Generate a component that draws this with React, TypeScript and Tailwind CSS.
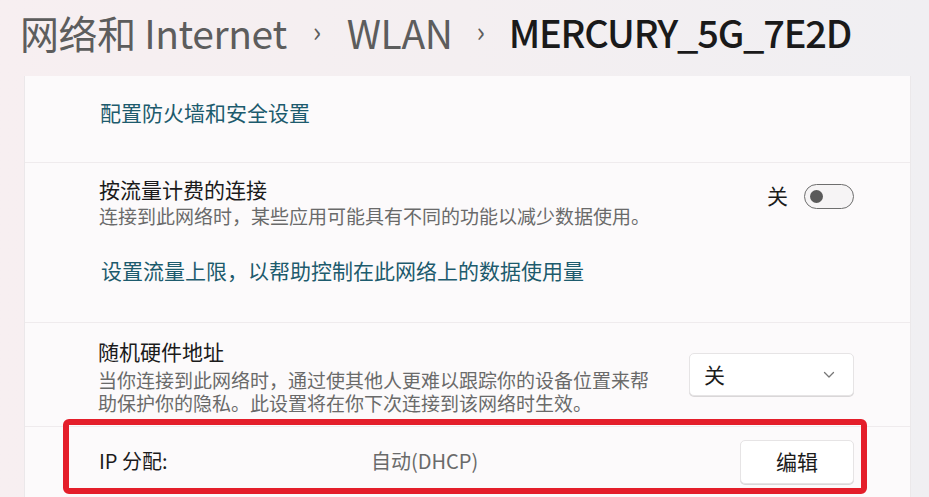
import React from "react";

const CJK = "font-['Noto_Sans_CJK_SC','Noto_Sans',sans-serif]";

function Toggle() {
  return (
    <div className="w-[50px] h-[25px] rounded-full border border-[#6e6e6e] bg-[#f6f4f5] flex items-center pl-[5px]">
      <div className="w-[13px] h-[13px] rounded-full bg-[#5a5a5a]" />
    </div>
  );
}

export default function App() {
  return (
    <div className={`relative w-[929px] h-[497px] overflow-hidden bg-gradient-to-r from-[#f7eff1] via-[#f4eff1] to-[#f0eff2] ${CJK}`}>
      {/* Header */}
      <div className="h-[76px] pl-[20px] flex items-center pb-[12px] text-[39px] leading-none tracking-[-0.4px]">
        <span className="text-[#5d5d5d]">网络和 Internet</span>
        <span className="text-[#5d5d5d] text-[28px] mx-[26px] relative -top-[2px]">›</span>
        <span className="text-[#5d5d5d]">WLAN</span>
        <span className="text-[#5d5d5d] text-[28px] mx-[24px] relative -top-[2px]">›</span>
        <span className="text-[#1a1a1a] font-medium text-[38px] tracking-[-1.2px]">MERCURY_5G_7E2D</span>
      </div>

      {/* Card */}
      <div className="ml-[24px] w-[887px] border-l border-r border-[#ebe8ea]">
        {/* Row 1 */}
        <div className="h-[87px] bg-[#fcfafb] pl-[75px] pt-[22px] border-b border-[#efebed]">
          <span className="text-[21px] leading-[28px] text-[#1d5b6d]">配置防火墙和安全设置</span>
        </div>

        {/* Row 2 */}
        <div className="h-[160px] bg-[#fcfafb] pl-[74px] pr-[56px] pt-[13px] border-b border-[#efebed]">
          <div className="flex items-center justify-between">
            <div className="flex flex-col">
              <span className="text-[21px] leading-[27px] text-[#1b1b1b]">按流量计费的连接</span>
              <span className="text-[19px] leading-[25px] text-[#6a6a6a]">连接到此网络时，某些应用可能具有不同的功能以减少数据使用。</span>
            </div>
            <div className="flex items-center gap-[16px] -mt-[12px]">
              <span className="text-[21px] text-[#1b1b1b]">关</span>
              <Toggle />
            </div>
          </div>
          <div className="mt-[28px] pl-[2px]">
            <span className="text-[21px] leading-[28px] text-[#1d5b6d]">设置流量上限，以帮助控制在此网络上的数据使用量</span>
          </div>
        </div>

        {/* Row 3 */}
        <div className="h-[104px] bg-[#fcfafb] pl-[73px] pr-[56px] pt-[15px] border-b border-[#efebed] flex justify-between">
          <div className="flex flex-col">
            <span className="text-[21px] leading-[26px] text-[#1b1b1b]">随机硬件地址</span>
            <span className="mt-[4px] text-[19px] leading-[23px] text-[#6a6a6a] w-[560px]">当你连接到此网络时，通过使其他人更难以跟踪你的设备位置来帮助保护你的隐私。此设置将在你下次连接到该网络时生效。</span>
          </div>
          <div className="mt-[15px] w-[165px] h-[43px] rounded-[5px] bg-white border border-[#e6e4e5] shadow-[0_1px_0_#d9d7d8] flex items-center justify-between pl-[14px] pr-[18px]">
            <span className="text-[21px] text-[#1b1b1b]">关</span>
            <svg width="12" height="8" viewBox="0 0 12 8" fill="none">
              <path d="M1.5 1.5 L6 6 L10.5 1.5" stroke="#777" strokeWidth="1.3" strokeLinecap="round" strokeLinejoin="round" />
            </svg>
          </div>
        </div>

        {/* Row 4 */}
        <div className="h-[80px] bg-[#fcfafb] pl-[74px] pr-[56px] pt-[13px] flex">
          <div className="w-[272px] pt-[7px]">
            <span className="text-[20px] leading-[28px] text-[#1b1b1b]">IP 分配:</span>
          </div>
          <div className="flex-1 pt-[7px]">
            <span className="text-[20px] leading-[28px] text-[#6a6a6a]">自动(DHCP)</span>
          </div>
          <div className="w-[114px] h-[44px] rounded-[5px] bg-white border border-[#e6e4e5] shadow-[0_1px_0_#d9d7d8] flex items-center justify-center">
            <span className="text-[21px] text-[#1b1b1b]">编辑</span>
          </div>
        </div>
      </div>

      {/* Red highlight box */}
      <div className="absolute left-[63px] top-[419px] w-[804px] h-[75px] border-[6px] border-[#e41e2a] rounded-[6px]" />
    </div>
  );
}
